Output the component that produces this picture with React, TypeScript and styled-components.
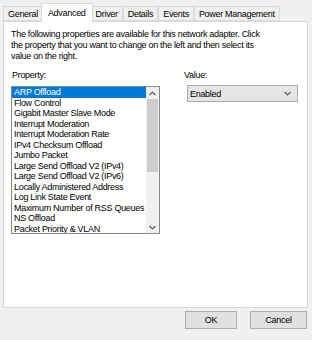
import React from "react";
import styled, { createGlobalStyle } from "styled-components";

const Global = createGlobalStyle`
  html, body { margin: 0; padding: 0; background: #f0f0f0; }
  body { font-family: "Liberation Sans", Arial, sans-serif; font-size: 9px; letter-spacing: -0.3px; color: #000; }
`;

const Window = styled.div`
  width: 312px;
  height: 340px;
  display: flex;
  flex-direction: column;
  background: #f0f0f0;
  overflow: hidden;
`;

const TabStrip = styled.div`
  display: flex;
  align-items: flex-end;
  height: 21px;
  padding-left: 3px;
  position: relative;
  z-index: 1;
`;

const Tab = styled.div<{ $active?: boolean }>`
  box-sizing: border-box;
  height: ${(p) => (p.$active ? "19px" : "15px")};
  margin: ${(p) => (p.$active ? "0 -2px -1px -2px" : "0")};
  padding: ${(p) => (p.$active ? "0 6px 1px" : "0 4px")};
  border: 1px solid #d9d9d9;
  border-bottom: ${(p) => (p.$active ? "none" : "1px solid #d9d9d9")};
  background: ${(p) => (p.$active ? "#fff" : "#f0f0f0")};
  display: flex;
  align-items: center;
  white-space: nowrap;
  position: relative;
  z-index: ${(p) => (p.$active ? 2 : 0)};
  & + & { border-left: ${(p) => (p.$active ? "1px solid #d9d9d9" : "none")}; }
`;

const Panel = styled.div`
  margin: 0 4px 0 3px;
  height: 287px;
  box-sizing: border-box;
  background: #fff;
  border: 1px solid #d9d9d9;
  padding: 7px 7px 0 7px;
  display: flex;
  flex-direction: column;
`;

const Description = styled.p`
  margin: 0;
  line-height: 11px;
  white-space: nowrap;
`;

const Columns = styled.div`
  display: grid;
  grid-template-columns: 149px 114px;
  column-gap: 24px;
  margin-top: 8px;
`;

const Column = styled.div`
  display: flex;
  flex-direction: column;
`;

const Label = styled.div<{ $indent?: number }>`
  line-height: 11px;
  padding-left: ${(p) => p.$indent ?? 0}px;
`;

const ListBox = styled.div`
  margin-top: 5px;
  width: 149px;
  height: 148px;
  box-sizing: border-box;
  border: 1px solid #828790;
  display: flex;
  background: #fff;
`;

const Items = styled.div`
  flex: 1;
  display: flex;
  flex-direction: column;
  overflow: hidden;
`;

const Item = styled.div<{ $selected?: boolean }>`
  height: 10.5px;
  line-height: 10.5px;
  padding-left: 2px;
  white-space: nowrap;
  background: ${(p) => (p.$selected ? "#0078d7" : "transparent")};
  color: ${(p) => (p.$selected ? "#fff" : "#000")};
`;

const ScrollBar = styled.div`
  width: 13px;
  background: #f0f0f0;
  display: flex;
  flex-direction: column;
  align-items: center;
`;

const ArrowBtn = styled.div`
  height: 12px;
  width: 100%;
  display: flex;
  align-items: center;
  justify-content: center;
`;

const Thumb = styled.div`
  width: 11px;
  height: 73px;
  background: #cdcdcd;
`;

const Spacer = styled.div`
  flex: 1;
`;

const Select = styled.div`
  margin-top: 4px;
  margin-left: 3px;
  height: 17px;
  box-sizing: border-box;
  border: 1px solid #adadad;
  background: #e5e5e5;
  display: flex;
  align-items: center;
  justify-content: space-between;
  padding: 0 6px 0 2px;
`;

const Footer = styled.div`
  flex: 1;
  display: flex;
  justify-content: flex-end;
  align-items: flex-start;
  gap: 13px;
  padding: 3px 5px 0 0;
`;

const Button = styled.div<{ $w: number }>`
  width: ${(p) => p.$w}px;
  height: 18px;
  box-sizing: border-box;
  border: 1px solid #adadad;
  background: #e1e1e1;
  display: flex;
  align-items: center;
  justify-content: center;
`;

const Chevron = ({ up }: { up?: boolean }) => (
  <svg width="7" height="5" viewBox="0 0 7 5">
    <polyline
      points={up ? "0.5,4 3.5,1 6.5,4" : "0.5,1 3.5,4 6.5,1"}
      fill="none"
      stroke="#606060"
      strokeWidth="1.2"
    />
  </svg>
);

const tabs = ["General", "Advanced", "Driver", "Details", "Events", "Power Management"];
const props = [
  "ARP Offload",
  "Flow Control",
  "Gigabit Master Slave Mode",
  "Interrupt Moderation",
  "Interrupt Moderation Rate",
  "IPv4 Checksum Offload",
  "Jumbo Packet",
  "Large Send Offload V2 (IPv4)",
  "Large Send Offload V2 (IPv6)",
  "Locally Administered Address",
  "Log Link State Event",
  "Maximum Number of RSS Queues",
  "NS Offload",
  "Packet Priority & VLAN",
];

export default function App() {
  return (
    <>
      <Global />
      <Window>
        <TabStrip>
          {tabs.map((t) => (
            <Tab key={t} $active={t === "Advanced"}>
              {t}
            </Tab>
          ))}
        </TabStrip>
        <Panel>
          <Description>
            The following properties are available for this network adapter. Click
            <br />
            the property that you want to change on the left and then select its
            <br />
            value on the right.
          </Description>
          <Columns>
            <Column>
              <Label $indent={1}>Property:</Label>
              <ListBox>
                <Items>
                  {props.map((p, i) => (
                    <Item key={p} $selected={i === 0}>
                      {p}
                    </Item>
                  ))}
                </Items>
                <ScrollBar>
                  <ArrowBtn>
                    <Chevron up />
                  </ArrowBtn>
                  <Thumb />
                  <Spacer />
                  <ArrowBtn>
                    <Chevron />
                  </ArrowBtn>
                </ScrollBar>
              </ListBox>
            </Column>
            <Column>
              <Label>Value:</Label>
              <Select>
                <span>Enabled</span>
                <Chevron />
              </Select>
            </Column>
          </Columns>
        </Panel>
        <Footer>
          <Button $w={52}>OK</Button>
          <Button $w={57}>Cancel</Button>
        </Footer>
      </Window>
    </>
  );
}
